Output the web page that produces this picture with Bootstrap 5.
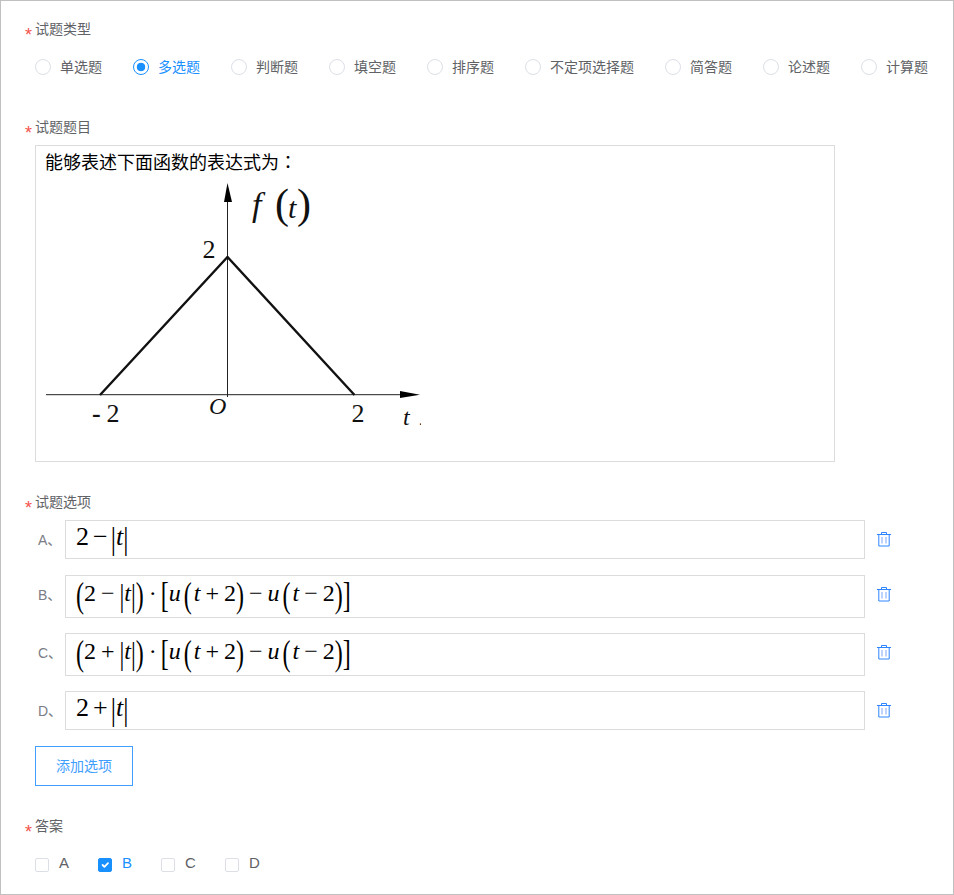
<!DOCTYPE html>
<html lang="zh-CN">
  <head>
    <meta charset="UTF-8" />
    <meta name="viewport" content="width=device-width, initial-scale=1.0" />
    <title>试题编辑</title>
    <link rel="stylesheet" href="https://cdn.jsdelivr.net/npm/bootstrap@5.3.0/dist/css/bootstrap.min.css" />
    <style>
      body {
        background-color: #fff;
        font-family: "Liberation Sans", "Noto Sans CJK SC", sans-serif;
        font-size: 14px;
        line-height: 20px;
        color: #606266;
      }
      .frame {
        height: 895px;
        border: 1px solid #c0c0c0;
        padding: 18px 0 0 34px;
        overflow: hidden;
      }
      .field-name {
        display: flex;
        height: 20px;
        font-size: 14px;
        line-height: 21px;
        color: #606266;
      }
      .req-star {
        width: 10px;
        margin-left: -10px;
        color: #f4524d;
        font-size: 18px;
        line-height: 32px;
      }
      .type-row {
        margin-top: 18px;
        gap: 31px;
        white-space: nowrap;
      }
      .pick-item {
        display: flex;
        align-items: center;
        margin: 0;
        padding: 0;
        min-height: 0;
        height: 20px;
      }
      .pick-item .form-check-input {
        float: none;
        width: 16px;
        height: 16px;
        margin: 0 9px 0 0;
        border: 1px solid #dcdfe6;
      }
      .pick-item .form-check-input:checked[type="radio"] {
        background-color: #fff;
        background-image: radial-gradient(circle, #1890ff 0, #1890ff 4px, #fff 4.6px);
        border-color: #1890ff;
      }
      .pick-item .form-check-input[type="checkbox"] {
        width: 14px;
        height: 14px;
        margin: 4px 10px 0 0;
        border-radius: 2px;
      }
      .pick-item .form-check-input:checked[type="checkbox"] {
        background-color: #1890ff;
        border-color: #1890ff;
      }
      .pick-item.on {
        color: #1890ff;
      }
      .stem-name {
        margin-top: 40px;
      }
      .stem-box {
        width: 800px;
        height: 317px;
        margin-top: 8px;
        padding: 6px 0 0 9px;
        border: 1px solid #dcdcdc;
        font-size: 18px;
        line-height: 22px;
        color: #000;
      }
      .stem-colon {
        font-family: "Noto Sans CJK TC", sans-serif;
        line-height: 0;
      }
      .graph {
        display: block;
      }
      .graph text {
        font-family: "Liberation Serif", serif;
        fill: #111;
      }
      .opts-name {
        margin-top: 30px;
      }
      .opt-list {
        margin-top: 8px;
      }
      .opt-row {
        display: flex;
        align-items: flex-start;
        margin-bottom: 15px;
      }
      .opt-row.first {
        margin-bottom: 16px;
      }
      .opt-letter {
        width: 30px;
        margin-top: 10px;
        padding-left: 3px;
        color: #7a7d85;
        white-space: nowrap;
      }
      .opt-box {
        display: flex;
        align-items: center;
        width: 800px;
        height: 43px;
        padding-left: 10px;
        border: 1px solid #dcdcdc;
        overflow: hidden;
      }
      .opt-box.short {
        height: 39px;
      }
      .del-icon {
        display: block;
        margin: 11px 0 0 12px;
      }
      .formula {
        display: flex;
        align-items: center;
        padding-bottom: 7px;
        font-family: "Liberation Serif", serif;
        font-size: 24px;
        line-height: 36px;
        color: #000;
        white-space: pre;
      }
      .formula i {
        font-style: italic;
      }
      .tall {
        display: block;
        transform: translateY(2px) scaleY(1.45);
      }
      .bar {
        display: block;
        transform: translateY(2px) scaleY(1.35);
      }
      .after-fn {
        margin: 0 2px 0 3px;
      }
      .op {
        margin: 0 5px;
      }
      .op-dot {
        margin: 0 4px 0 5px;
      }
      .short .formula {
        padding-bottom: 6px;
        font-size: 26px;
      }
      .short .bar {
        transform: translateY(2px) scaleY(1.25);
      }
      .short .op {
        margin: 0 3px 0 4px;
      }
      .add-btn {
        display: block;
        width: 98px;
        height: 40px;
        margin-top: 16px;
        padding: 0;
        border: 1px solid #409eff;
        border-radius: 0;
        background: #fff;
        color: #409eff;
        font-size: 14px;
      }
      .ans-name {
        margin-top: 30px;
      }
      .ans-row {
        margin-top: 17px;
        gap: 29px;
        font-size: 15px;
      }
    </style>
  </head>
  <body>
    <div class="frame">
      <div class="field-name"><span class="req-star">*</span>试题类型</div>
      <div class="d-flex type-row">
        <label class="form-check pick-item"><input class="form-check-input" type="radio" name="qtype" />单选题</label>
        <label class="form-check pick-item on"><input class="form-check-input" type="radio" name="qtype" checked />多选题</label>
        <label class="form-check pick-item"><input class="form-check-input" type="radio" name="qtype" />判断题</label>
        <label class="form-check pick-item"><input class="form-check-input" type="radio" name="qtype" />填空题</label>
        <label class="form-check pick-item"><input class="form-check-input" type="radio" name="qtype" />排序题</label>
        <label class="form-check pick-item"><input class="form-check-input" type="radio" name="qtype" />不定项选择题</label>
        <label class="form-check pick-item"><input class="form-check-input" type="radio" name="qtype" />简答题</label>
        <label class="form-check pick-item"><input class="form-check-input" type="radio" name="qtype" />论述题</label>
        <label class="form-check pick-item"><input class="form-check-input" type="radio" name="qtype" />计算题</label>
      </div>

      <div class="field-name stem-name"><span class="req-star">*</span>试题题目</div>
      <div class="stem-box">
        <div>能够表述下面函数的表达式为<span class="stem-colon" lang="zh-TW">：</span></div>
        <svg class="graph" width="376" height="260" viewBox="45 174 376 260">
          <line x1="227.5" y1="190" x2="227.5" y2="397" stroke="#222" stroke-width="1" />
          <line x1="46" y1="394.7" x2="404" y2="394.7" stroke="#222" stroke-width="1" />
          <polygon points="227.5,183 232,202 224,202" fill="#000" />
          <polygon points="420,394.7 400,391 400,398" fill="#000" />
          <polyline points="100,395 227.5,257 354.5,395" fill="none" stroke="#111" stroke-width="2.4" />
          <text x="252" y="216" font-size="34" font-style="italic">f</text>
          <text x="275" y="218" font-size="42">(</text>
          <text x="288" y="218" font-size="30" font-style="italic">t</text>
          <text x="297" y="218" font-size="42">)</text>
          <text x="202.5" y="258" font-size="26">2</text>
          <text x="92" y="422" font-size="26" font-weight="bold">-</text>
          <text x="106.5" y="422" font-size="26">2</text>
          <text x="209" y="414" font-size="24" font-style="italic">O</text>
          <text x="351.5" y="422" font-size="26">2</text>
          <text x="403" y="425" font-size="24" font-style="italic">t</text>
          <text x="419" y="425" font-size="14">.</text>
        </svg>
      </div>

      <div class="field-name opts-name"><span class="req-star">*</span>试题选项</div>
      <div class="opt-list">
        <div class="opt-row first">
          <span class="opt-letter">A、</span>
          <div class="opt-box short">
            <div class="formula">2<span class="op">−</span><span class="bar">|</span><i>t</i><span class="bar">|</span></div>
          </div>
          <svg class="del-icon" width="14" height="16" viewBox="0 0 14 16"><path d="M0 3.5h14M4.5 3.5V1.5h5v2M1.8 3.5V15h10.4V3.5" fill="none" stroke="#2e86ff" /><path d="M5 6v6.5M9 6v6.5" stroke="#a9c6ff" stroke-width="1.5" /></svg>
        </div>
        <div class="opt-row">
          <span class="opt-letter">B、</span>
          <div class="opt-box">
            <div class="formula"><span class="tall">(</span>2<span class="op">−</span><span class="bar">|</span><i>t</i><span class="bar">|</span><span class="tall">)</span><span class="op-dot">·</span><span class="tall">[</span><i>u</i><span class="tall after-fn">(</span><i>t</i><span class="op">+</span>2<span class="tall">)</span><span class="op">−</span><i>u</i><span class="tall after-fn">(</span><i>t</i><span class="op">−</span>2<span class="tall">)</span><span class="tall">]</span></div>
          </div>
          <svg class="del-icon" width="14" height="16" viewBox="0 0 14 16"><path d="M0 3.5h14M4.5 3.5V1.5h5v2M1.8 3.5V15h10.4V3.5" fill="none" stroke="#2e86ff" /><path d="M5 6v6.5M9 6v6.5" stroke="#a9c6ff" stroke-width="1.5" /></svg>
        </div>
        <div class="opt-row">
          <span class="opt-letter">C、</span>
          <div class="opt-box">
            <div class="formula"><span class="tall">(</span>2<span class="op">+</span><span class="bar">|</span><i>t</i><span class="bar">|</span><span class="tall">)</span><span class="op-dot">·</span><span class="tall">[</span><i>u</i><span class="tall after-fn">(</span><i>t</i><span class="op">+</span>2<span class="tall">)</span><span class="op">−</span><i>u</i><span class="tall after-fn">(</span><i>t</i><span class="op">−</span>2<span class="tall">)</span><span class="tall">]</span></div>
          </div>
          <svg class="del-icon" width="14" height="16" viewBox="0 0 14 16"><path d="M0 3.5h14M4.5 3.5V1.5h5v2M1.8 3.5V15h10.4V3.5" fill="none" stroke="#2e86ff" /><path d="M5 6v6.5M9 6v6.5" stroke="#a9c6ff" stroke-width="1.5" /></svg>
        </div>
        <div class="opt-row">
          <span class="opt-letter">D、</span>
          <div class="opt-box short">
            <div class="formula">2<span class="op">+</span><span class="bar">|</span><i>t</i><span class="bar">|</span></div>
          </div>
          <svg class="del-icon" width="14" height="16" viewBox="0 0 14 16"><path d="M0 3.5h14M4.5 3.5V1.5h5v2M1.8 3.5V15h10.4V3.5" fill="none" stroke="#2e86ff" /><path d="M5 6v6.5M9 6v6.5" stroke="#a9c6ff" stroke-width="1.5" /></svg>
        </div>
      </div>
      <button type="button" class="btn add-btn">添加选项</button>

      <div class="field-name ans-name"><span class="req-star">*</span>答案</div>
      <div class="d-flex ans-row">
        <label class="form-check pick-item"><input class="form-check-input" type="checkbox" />A</label>
        <label class="form-check pick-item on"><input class="form-check-input" type="checkbox" checked />B</label>
        <label class="form-check pick-item"><input class="form-check-input" type="checkbox" />C</label>
        <label class="form-check pick-item"><input class="form-check-input" type="checkbox" />D</label>
      </div>
    </div>
    <script src="https://cdn.jsdelivr.net/npm/bootstrap@5.3.0/dist/js/bootstrap.bundle.min.js"></script>
  </body>
</html>
